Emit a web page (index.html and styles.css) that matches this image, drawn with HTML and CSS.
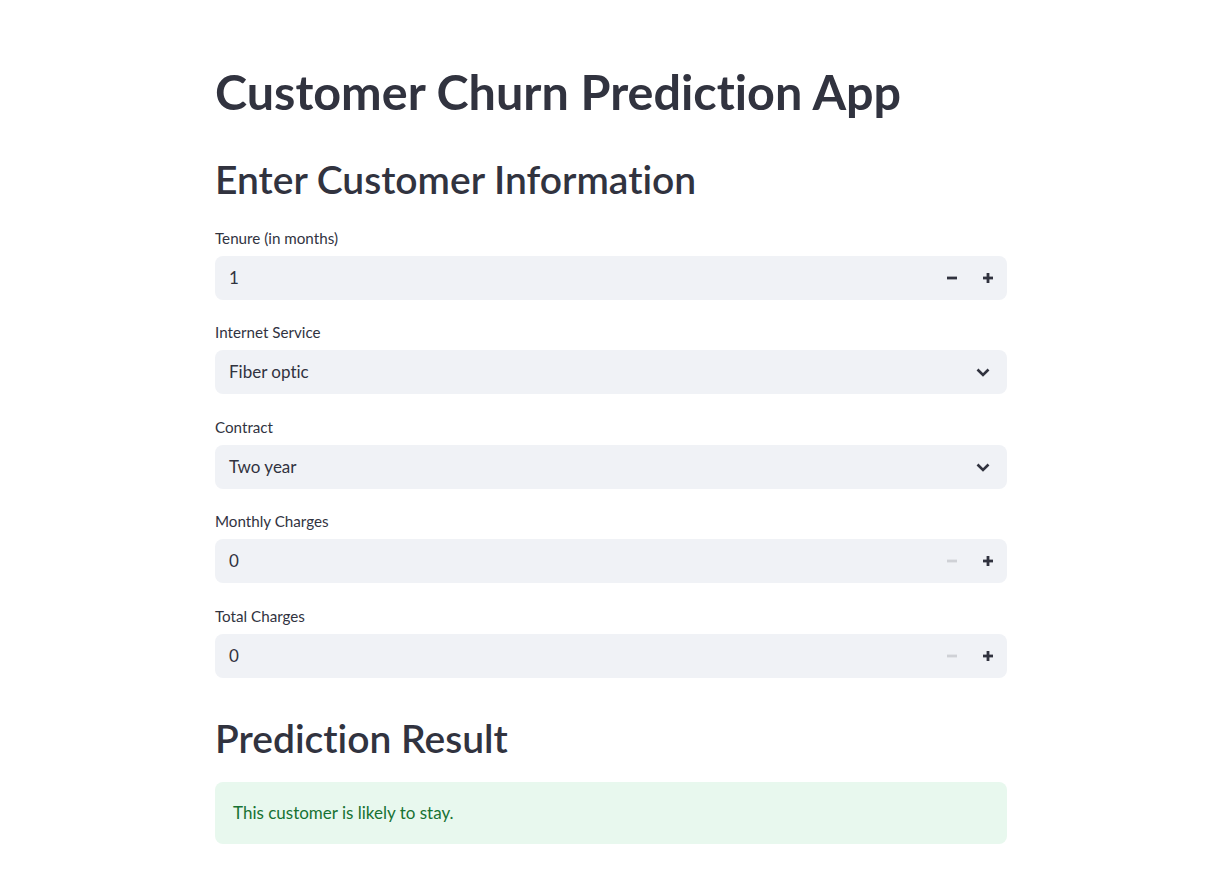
FILE: index.html
```html
<!DOCTYPE html>
<html lang="en">
<head>
<meta charset="utf-8">
<title>Customer Churn Prediction App</title>
<link rel="stylesheet" href="styles.css">
</head>
<body>
<main class="main">
  <h1 class="title">Customer Churn Prediction App</h1>
  <h2 class="subheader">Enter Customer Information</h2>

  <section class="form">
    <div class="field">
      <label class="label">Tenure (in months)</label>
      <div class="input">
        <span class="value">1</span>
        <div class="steps">
          <button class="step"><svg width="10" height="10" viewBox="0 0 10 10"><rect x="0" y="3.6" width="10" height="2.8" fill="currentColor"/></svg></button>
          <button class="step"><svg width="10" height="10" viewBox="0 0 10 10"><rect x="0" y="3.6" width="10" height="2.8" fill="currentColor"/><rect x="3.6" y="0" width="2.8" height="10" fill="currentColor"/></svg></button>
        </div>
      </div>
    </div>

    <div class="field">
      <label class="label">Internet Service</label>
      <div class="input select">
        <span class="value">Fiber optic</span>
        <svg class="chevron" width="24" height="24" viewBox="0 0 24 24"><path d="M6.5 9.5 L12 15 L17.5 9.5" fill="none" stroke="currentColor" stroke-width="2.6"/></svg>
      </div>
    </div>

    <div class="field">
      <label class="label">Contract</label>
      <div class="input select">
        <span class="value">Two year</span>
        <svg class="chevron" width="24" height="24" viewBox="0 0 24 24"><path d="M6.5 9.5 L12 15 L17.5 9.5" fill="none" stroke="currentColor" stroke-width="2.6"/></svg>
      </div>
    </div>

    <div class="field">
      <label class="label">Monthly Charges</label>
      <div class="input">
        <span class="value">0</span>
        <div class="steps">
          <button class="step disabled"><svg width="10" height="10" viewBox="0 0 10 10"><rect x="0" y="3.6" width="10" height="2.8" fill="currentColor"/></svg></button>
          <button class="step"><svg width="10" height="10" viewBox="0 0 10 10"><rect x="0" y="3.6" width="10" height="2.8" fill="currentColor"/><rect x="3.6" y="0" width="2.8" height="10" fill="currentColor"/></svg></button>
        </div>
      </div>
    </div>

    <div class="field">
      <label class="label">Total Charges</label>
      <div class="input">
        <span class="value">0</span>
        <div class="steps">
          <button class="step disabled"><svg width="10" height="10" viewBox="0 0 10 10"><rect x="0" y="3.6" width="10" height="2.8" fill="currentColor"/></svg></button>
          <button class="step"><svg width="10" height="10" viewBox="0 0 10 10"><rect x="0" y="3.6" width="10" height="2.8" fill="currentColor"/><rect x="3.6" y="0" width="2.8" height="10" fill="currentColor"/></svg></button>
        </div>
      </div>
    </div>
  </section>

  <h2 class="subheader result-head">Prediction Result</h2>
  <div class="alert">This customer is likely to stay.</div>
</main>
</body>
</html>
```

FILE: styles.css
```css
* { box-sizing: border-box; }

html, body {
  margin: 0;
  padding: 0;
  background: #ffffff;
}

body {
  font-family: "Lato", "Liberation Sans", sans-serif;
  font-variant-ligatures: none;
  color: #31333f;
}

.main {
  width: 792px;
  margin-left: 215px;
  padding-top: 61px;
  display: flex;
  flex-direction: column;
}

.title {
  margin: 0;
  font-size: 48.5px;
  line-height: 60px;
  font-weight: 700;
}

.subheader {
  margin: 34.2px 0 0;
  font-size: 39px;
  line-height: 48px;
  font-weight: 600;
}

.form {
  margin-top: 23.6px;
  display: flex;
  flex-direction: column;
  gap: 21.5px;
}

.field {
  display: flex;
  flex-direction: column;
}

.label {
  font-size: 15.2px;
  line-height: 22px;
  margin-bottom: 7px;
}

.input {
  height: 44px;
  background: #f0f2f6;
  border-radius: 8px;
  display: flex;
  align-items: center;
  justify-content: space-between;
  padding-left: 14px;
  padding-right: 1.5px;
}

.value {
  font-size: 17px;
  line-height: 24px;
}

.select {
  padding-right: 12px;
}

.chevron {
  color: #31333f;
  display: block;
}

.steps {
  display: flex;
  height: 100%;
}

.step {
  width: 36px;
  height: 100%;
  border: 0;
  background: transparent;
  padding: 0;
  display: flex;
  align-items: center;
  justify-content: center;
  color: #31333f;
}

.step.disabled {
  color: #cfd1d6;
}

.step svg { display: block; }

.result-head {
  margin-top: 36.4px;
}

.alert {
  margin-top: 19.6px;
  height: 62px;
  padding: 16px 18px;
  border-radius: 8px;
  background: #e8f8ee;
  color: #177233;
  font-size: 17px;
  line-height: 30px;
}
```
